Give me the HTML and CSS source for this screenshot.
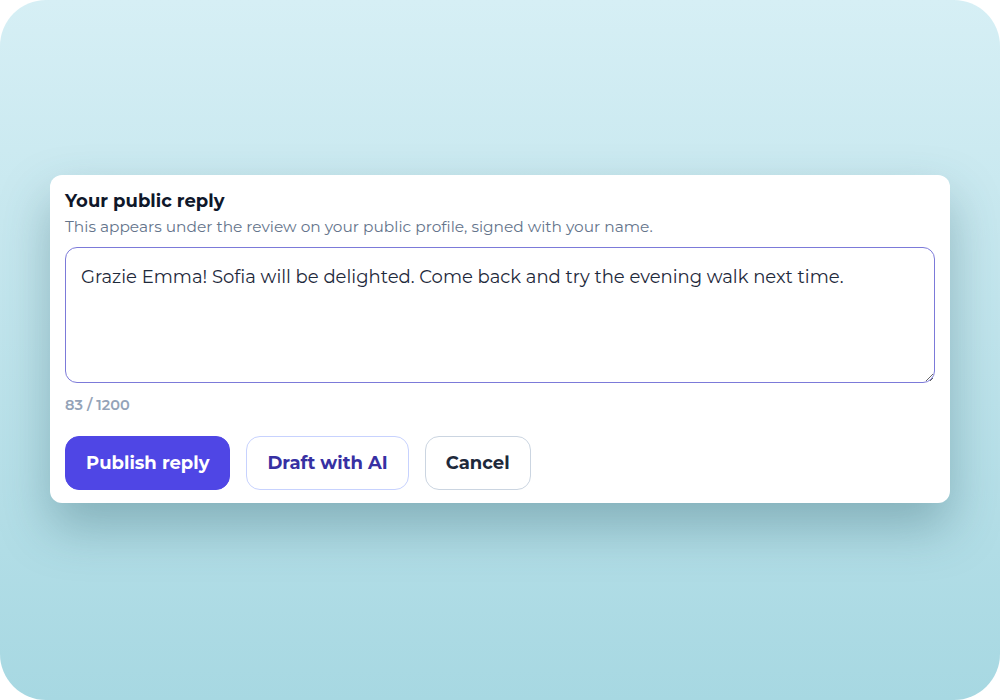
FILE: index.html
```html
<!DOCTYPE html>
<html>
<head>
<meta charset="utf-8">
<link rel="stylesheet" href="styles.css">
</head>
<body>
<div class="stage">
  <div class="card">
    <h2 class="title">Your public reply</h2>
    <p class="sub">This appears under the review on your public profile, signed with your name.</p>
    <textarea class="reply">Grazie Emma! Sofia will be delighted. Come back and try the evening walk next time.</textarea>
    <div class="count">83 / 1200</div>
    <div class="actions">
      <button class="btn primary">Publish reply</button>
      <button class="btn ai">Draft with AI</button>
      <button class="btn cancel">Cancel</button>
    </div>
  </div>
</div>
</body>
</html>
```
FILE: styles.css
```css
html, body {
  margin: 0;
  padding: 0;
  background: #ffffff;
}
body {
  font-family: "Montserrat", "Inter", "Noto Sans", sans-serif;
}
.stage {
  width: 1000px;
  height: 700px;
  border-radius: 46px;
  background: linear-gradient(180deg, #d6eff5 0%, #a7d8e2 100%);
  display: flex;
  align-items: center;
  justify-content: center;
  box-sizing: border-box;
  padding-bottom: 23px;
}
.card {
  width: 900px;
  box-sizing: border-box;
  background: #ffffff;
  border-radius: 12px;
  padding: 15px 15px 13px;
  box-shadow: 0 24px 50px rgba(40, 90, 100, 0.35);
}
.title {
  margin: 0;
  font-size: 18px;
  line-height: 22px;
  font-weight: 700;
  color: #0f172a;
}
.sub {
  margin: 5px 0 0;
  font-size: 15.4px;
  line-height: 20px;
  color: #64748b;
}
.reply {
  display: block;
  margin-top: 10px;
  width: 100%;
  height: 136px;
  box-sizing: border-box;
  border: 1.5px solid #7c7ad9;
  border-radius: 12px;
  padding: 17px 15px 15px;
  font-family: inherit;
  font-size: 18px;
  line-height: 24px;
  color: #1e293b;
  outline: none;
  resize: vertical;
}
.count {
  margin-top: 13px;
  font-size: 14.5px;
  line-height: 18px;
  font-weight: 600;
  color: #94a3b8;
}
.actions {
  display: flex;
  gap: 16px;
  margin-top: 22px;
}
.btn {
  height: 54px;
  box-sizing: border-box;
  border-radius: 14px;
  padding: 0 20px;
  font-family: inherit;
  font-size: 18px;
  font-weight: 700;
  background: #ffffff;
  cursor: pointer;
}
.primary {
  background: #4f46e5;
  border: 1.5px solid #4f46e5;
  color: #ffffff;
}
.ai {
  border: 1.5px solid #c7d2fe;
  color: #3730a3;
}
.cancel {
  border: 1.5px solid #cbd5e1;
  color: #1e293b;
}
```
